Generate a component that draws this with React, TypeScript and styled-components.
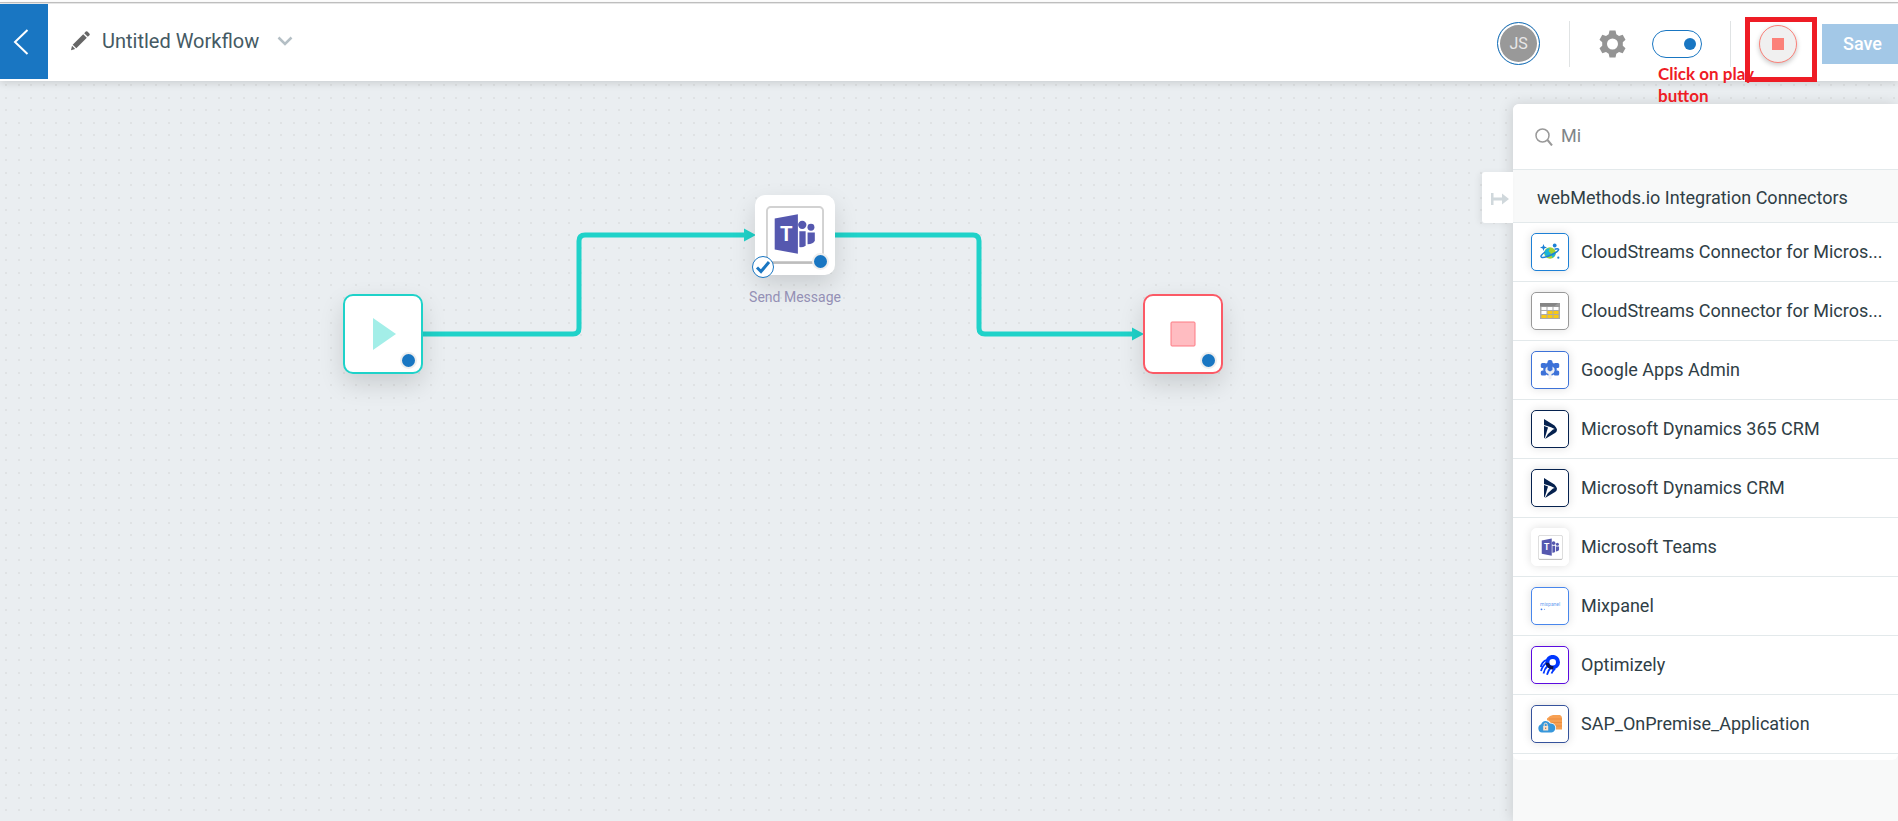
import React from "react";
import styled, { createGlobalStyle } from "styled-components";

const GlobalStyle = createGlobalStyle`
  *, *::before, *::after { box-sizing: border-box; }
  body {
    margin: 0;
    overflow-x: hidden;
    font-family: Roboto, "Liberation Sans", sans-serif;
    color: #2f3e46;
  }
  button, input { font-family: inherit; }
`;

const Page = styled.div`
  display: flex;
  flex-direction: column;
  min-height: 100vh;
  background: #ffffff;
`;

const WindowEdge = styled.div`
  height: 4px;
  border-top: 2px solid #ffffff;
  background: linear-gradient(#c4c4c4 50%, #f0f0f0 50%);
`;

const Header = styled.header`
  position: relative;
  z-index: 3;
  display: flex;
  justify-content: space-between;
  height: 77px;
  background: #ffffff;
  box-shadow: 0 2px 8px rgba(0, 0, 0, 0.14);
`;

const HeaderSide = styled.div`
  display: flex;
  align-items: center;
`;

const HeaderActions = styled(HeaderSide)`
  padding-top: 2px;
`;

const BackButton = styled.button`
  display: grid;
  place-items: center;
  align-self: flex-start;
  width: 48px;
  height: 75px;
  padding: 0 6px 0 0;
  border: 0;
  background: #1976c2;
  cursor: pointer;
`;

const TitleBar = styled.div`
  display: flex;
  align-items: center;
  padding: 0 0 4px 22px;
`;

const Title = styled.h1`
  margin: 0 18px 0 12px;
  font-size: 20px;
  line-height: 24px;
  font-weight: 400;
  color: #455a64;
`;

const PlainButton = styled.button`
  display: grid;
  place-items: center;
  padding: 0;
  border: 0;
  background: none;
  cursor: pointer;
`;

const Avatar = styled.button`
  width: 43px;
  height: 43px;
  padding: 0;
  border: 1px solid #1976c2;
  border-radius: 50%;
  background: #999999;
  box-shadow: inset 0 0 0 2px #ffffff;
  color: #e8e8e8;
  font-size: 16px;
  line-height: 20px;
`;

const Divider = styled.span<{ $gap: number }>`
  width: 1px;
  height: 46px;
  margin: 0 ${(p) => p.$gap}px;
  background: #e0e3e4;
`;

const Toggle = styled.input`
  appearance: none;
  display: flex;
  align-items: center;
  justify-content: flex-end;
  width: 50px;
  height: 28px;
  margin: 0 0 0 26px;
  padding: 0 5px;
  border: 1px solid #1976c2;
  border-radius: 14px;
  background: #ffffff;
  &::before {
    content: "";
    width: 12px;
    height: 12px;
    border-radius: 50%;
    background: #1976c2;
  }
`;

const StopArea = styled.div`
  position: relative;
  display: flex;
`;

const StopButton = styled.button`
  display: grid;
  place-items: center;
  width: 38px;
  height: 38px;
  padding: 0;
  border: 1px solid #fb8179;
  border-radius: 50%;
  background: #f0f0f0;
  box-shadow: 0 2px 5px rgba(0, 0, 0, 0.22);
  &::before {
    content: "";
    width: 12px;
    height: 12px;
    background: #fb8179;
  }
`;

const Highlight = styled.span`
  position: absolute;
  top: -8px;
  left: -14px;
  width: 72px;
  height: 65px;
  border: 5px solid #ee1c25;
  pointer-events: none;
`;

const Callout = styled.p`
  position: absolute;
  top: 38px;
  left: -101px;
  width: 115px;
  margin: 0;
  font: 700 17px/22px Lato, "Open Sans", sans-serif;
  color: #ee1c25;
`;

const SaveButton = styled.button`
  height: 40px;
  margin-left: 25px;
  padding: 0 16px 0 21px;
  border: 0;
  background: #a3c8e7;
  color: #ffffff;
  font-size: 18px;
  font-weight: 500;
  line-height: 24px;
`;

const dot = "radial-gradient(circle at 12px 12px, #dfe2e4 1px, transparent 1px)";

const Workspace = styled.main`
  display: flex;
  flex: 1;
  background-color: #eaeef1;
  background-image: ${dot}, ${dot}, ${dot}, ${dot};
  background-size: 25px 25px;
  background-position: -6px -8px, 7px -8px, -6px 5px, 7px 5px;
`;

const Canvas = styled.section`
  position: relative;
  flex: 1;
  min-width: 0;
`;

const Wires = styled.svg`
  position: absolute;
  top: 0;
  left: 0;
  width: 100%;
  height: 100%;
`;

const Node = styled.div<{ $x: number; $y: number; $edge: string }>`
  position: absolute;
  left: ${(p) => p.$x}px;
  top: ${(p) => p.$y}px;
  display: grid;
  place-items: center;
  width: 80px;
  height: 80px;
  border: 2px solid ${(p) => p.$edge};
  border-radius: 10px;
  background: #ffffff;
  box-shadow: 0 10px 24px rgba(0, 0, 0, 0.14);
`;

const Dot = styled.span`
  position: absolute;
  right: 4px;
  bottom: 3px;
  width: 17px;
  height: 17px;
  border: 2px solid #eeeeee;
  border-radius: 50%;
  background: #1976c2;
`;

const Check = styled.span`
  position: absolute;
  left: -5px;
  bottom: -5px;
  display: grid;
  place-items: center;
  width: 22px;
  height: 22px;
  border: 1px solid #1976c2;
  border-radius: 50%;
  background: #ffffff;
`;

const NodeLabel = styled.span`
  position: absolute;
  top: 90px;
  left: 50%;
  transform: translateX(-50%);
  font-size: 14px;
  line-height: 20px;
  white-space: nowrap;
  color: #9490b5;
`;

const Panel = styled.aside`
  position: relative;
  display: flex;
  flex-direction: column;
  width: 385px;
  margin-top: 23px;
  border-top-left-radius: 6px;
  background: #f8f9f9;
  box-shadow: -2px 0 14px rgba(0, 0, 0, 0.13);
`;

const CollapseTab = styled.button`
  position: absolute;
  top: 68px;
  left: -31px;
  display: grid;
  place-items: center;
  width: 31px;
  height: 51px;
  padding: 2px 0 0 5px;
  border: 0;
  border-radius: 3px 0 0 3px;
  background: #ffffff;
  box-shadow: -3px 1px 6px rgba(0, 0, 0, 0.06);
`;

const Search = styled.label`
  display: flex;
  align-items: center;
  gap: 8px;
  height: 66px;
  padding: 0 22px;
  border-bottom: 1px solid #e3e9eb;
  border-top-left-radius: 6px;
  background: #ffffff;
`;

const SearchInput = styled.input`
  flex: 1;
  min-width: 0;
  padding: 0 0 2px;
  border: 0;
  outline: 0;
  background: none;
  font-size: 18px;
  line-height: 24px;
  color: #808588;
`;

const GroupTitle = styled.h2`
  margin: 0;
  padding: 16px 24px 12px;
  border-bottom: 1px solid #e3e9eb;
  font-size: 18px;
  line-height: 24px;
  font-weight: 400;
`;

const List = styled.ul`
  margin: 0;
  padding: 0 0 6px;
  border-radius: 0 0 6px 6px;
  background: #ffffff;
  list-style: none;
`;

const Row = styled.li`
  display: flex;
  align-items: center;
  gap: 12px;
  height: 59px;
  padding: 0 18px;
  border-bottom: 1px solid #e3e9eb;
  font-size: 18px;
  line-height: 24px;
  white-space: nowrap;
`;

const Tile = styled.span<{ $edge: string }>`
  display: grid;
  place-items: center;
  flex: none;
  width: 38px;
  height: 38px;
  border: 1px solid ${(p) => p.$edge};
  border-radius: 5px;
  background: #ffffff;
  box-shadow: 0 0 10px rgba(0, 0, 0, 0.13);
`;

const TeamsIcon = ({ size }: { size: number }) => (
  <svg width={size} height={size} viewBox="0 0 60 60">
    <rect x="1" y="1" width="58" height="58" rx="4" fill="#fff" stroke="#d2d2d2" strokeWidth="2" />
    <path d="M3 58.500H57" stroke="#bdbdbd" strokeWidth="2.500" />
    <g fill="#5558af">
      <path d="M9 13 33 8.500V49.500L9 45z" />
      <circle cx="37.500" cy="19.500" r="4.300" />
      <circle cx="46.500" cy="22" r="3.600" />
      <path d="M34.500 26H41V41Q38 43 34.500 42.500z" />
      <path d="M43 27.500H50.500V36Q49 39.500 43 39.500z" />
    </g>
    <text x="21" y="36.500" textAnchor="middle" fontFamily="Roboto, sans-serif" fontWeight="700" fontSize="21" fill="#fff">T</text>
  </svg>
);

const PlanetIcon = () => (
  <svg width="20" height="20" viewBox="0 0 20 20">
    <circle cx="10" cy="11" r="5.800" fill="#a4d233" />
    <path d="M5 8.500Q7 5.500 10 6.500L8.500 9 11 11.500 7 15Q3.500 12.500 5 8.500zM11.500 12l4-2q.5 4-3 6z" fill="#1bb5d8" />
    <path d="M5 10Q-.5 14 1.500 15.200C5 16.500 19 10 18.600 7.400Q18 6.200 14.600 7.200" fill="none" stroke="#1d80d6" strokeWidth="1.500" />
    <path d="M3.500 2l.9 2.600L7 5.500l-2.600.9L3.500 9l-.9-2.600L0 5.500l2.600-.9z" fill="#1d80d6" />
    <circle cx="14.700" cy="3.500" r="1.900" fill="#1d80d6" />
    <circle cx="18.300" cy="15.700" r="1.100" fill="#1d80d6" />
  </svg>
);

const TableIcon = () => (
  <svg width="20" height="20" viewBox="0 0 20 20">
    <path d="M0 2H20V18H0z" fill="#aaa" />
    <path d="M0 2H20V5.500H0z" fill="#858585" />
    <path d="M14 5.500 18 2H20V5.500z" fill="#9b9b9b" />
    <path d="M1.500 6H6.500V9H1.500zM7.500 6H12.500V9H7.500zM13.500 6H18.500V9H13.500zM1.500 10H6.500V13H1.500z" fill="#fff" />
    <path d="M7.500 10H12.500V13H7.500zM13.500 10H18.500V13H13.500zM1.500 14H6.500V17H1.500zM7.500 14H12.500V17H7.500zM13.500 14H18.500V17H13.500z" fill="#f8c915" />
  </svg>
);

const AdminIcon = () => (
  <svg width="20" height="20" viewBox="0 0 20 20">
    <g fill="#3d72d8">
      <circle cx="10" cy="9" r="6.800" />
      <rect x="7.500" y="0" width="5" height="5" rx="2" />
      <rect x=".800" y="3" width="5.500" height="5" rx="1.500" />
      <rect x="13.700" y="3" width="5.500" height="5" rx="1.500" />
      <rect x=".800" y="10.500" width="5.500" height="5" rx="1.500" />
      <rect x="13.700" y="10.500" width="5.500" height="5" rx="1.500" />
    </g>
    <path d="M7.500 6.500A4 4 0 0 0 8.500 14V18.500q1.500 1.500 3 0V14A4 4 0 0 0 12.500 6.500V10L10 11.500 7.500 10z" fill="#eef0f3" />
  </svg>
);

const DynamicsIcon = () => (
  <svg width="20" height="20" viewBox="0 0 20 20" fill="#06224f">
    <path d="M4 0 14.500 6.500Q16.500 8 16.800 11L11 8.200 4 6z" />
    <path d="M16.800 9.500V12Q16.500 13 15 14L5 20 8 15 13 10.500z" />
    <path d="M4 7 8 8.500 5 18.500 4 19.500z" />
  </svg>
);

const MixpanelIcon = () => (
  <svg width="22" height="20" viewBox="0 0 22 20">
    <text x="1" y="10" fontFamily="Roboto, sans-serif" fontSize="5" fill="#6f9ff0">mixpanel</text>
    <circle cx="2.500" cy="13.300" r=".9" fill="#3c78e8" />
    <circle cx="5.500" cy="13.300" r=".6" fill="#7aa6f4" />
  </svg>
);

const OptimizelyIcon = () => (
  <svg width="20" height="20" viewBox="0 0 20 20">
    <g fill="none" stroke="#0037ff" strokeWidth="1.800">
      <path d="M6 5Q1.500 7.500 .900 12" />
      <path d="M6.500 8Q2.500 10.500 1 16" />
      <path d="M8 10.500Q4.500 13.500 3.500 18.500" />
      <path d="M11 12.500Q8 15.500 7 19.800" />
      <path d="M15 13.500Q12.500 16 11.500 18.500" />
    </g>
    <circle cx="12.700" cy="7.200" r="5.300" fill="#fff" stroke="#0037ff" strokeWidth="4" />
    <path d="M5.500 7.500A7.300 7.300 0 0 0 13 14.500L13.500 11A4 4 0 0 1 9 8z" fill="#0a1250" />
  </svg>
);

const SapIcon = () => (
  <svg width="26" height="20" viewBox="0 0 26 20">
    <path d="M10 4.500Q13 1 16 1h7q2 1 2 3v11.500H18L10 8z" fill="#f7a052" />
    <path d="M12 5H25M14 8.500H25M17 12H25" stroke="#e8893c" strokeWidth=".8" />
    <path
      d="M5 18.500a4.300 4.300 0 0 1-.8-8.300A4.800 4.800 0 0 1 13 9.500a4.500 4.500 0 0 1 1.500 9z"
      fill="#3797db"
      stroke="#fff"
      strokeWidth="1.600"
      paintOrder="stroke"
    />
    <rect x="6.200" y="12" width="5" height="4.500" fill="#fde3cb" />
    <path d="M7.200 12v-1.300a1.500 1.500 0 0 1 3 0V12" fill="none" stroke="#fde3cb" />
    <path d="M8.700 13.500V15" stroke="#a5694a" />
  </svg>
);

const connectors = [
  { name: "CloudStreams Connector for Micros...", edge: "#1d80d6", icon: <PlanetIcon /> },
  { name: "CloudStreams Connector for Micros...", edge: "#999999", icon: <TableIcon /> },
  { name: "Google Apps Admin", edge: "#3d72d8", icon: <AdminIcon /> },
  { name: "Microsoft Dynamics 365 CRM", edge: "#06224f", icon: <DynamicsIcon /> },
  { name: "Microsoft Dynamics CRM", edge: "#06224f", icon: <DynamicsIcon /> },
  { name: "Microsoft Teams", edge: "#ffffff", icon: <TeamsIcon size={25} /> },
  { name: "Mixpanel", edge: "#4886ec", icon: <MixpanelIcon /> },
  { name: "Optimizely", edge: "#5b0be0", icon: <OptimizelyIcon /> },
  { name: "SAP_OnPremise_Application", edge: "#35529c", icon: <SapIcon /> },
];

export default function App() {
  return (
    <Page>
      <GlobalStyle />
      <WindowEdge />
      <Header>
        <HeaderSide>
          <BackButton aria-label="Back">
            <svg width="18" height="26" viewBox="0 0 18 26" fill="none" stroke="#fff" strokeWidth="2">
              <path d="M15.500 1 3 13 15.500 25" />
            </svg>
          </BackButton>
          <TitleBar>
            <PlainButton aria-label="Rename workflow">
              <svg width="20" height="20" viewBox="0 0 20 20" fill="#666">
                <path d="M13.200 3.200 16.800 6.800 6.300 17.300 2.700 13.700z" />
                <path d="M14.200 2.200 15.800.600q.8-.6 1.600 0L19.400 2.600q.7.800 0 1.600L17.800 5.800z" />
                <path d="M2 14.800 5.200 18 1 19.200z" />
              </svg>
            </PlainButton>
            <Title>Untitled Workflow</Title>
            <PlainButton aria-label="Workflow menu">
              <svg width="16" height="10" viewBox="0 0 16 10" fill="none" stroke="#b4bfc5" strokeWidth="2.500">
                <path d="M1.500 1.500 8 8 14.500 1.500" />
              </svg>
            </PlainButton>
          </TitleBar>
        </HeaderSide>
        <HeaderActions>
          <Avatar>JS</Avatar>
          <Divider $gap={29} />
          <PlainButton aria-label="Settings">
            <svg width="27" height="28" viewBox="0 0 27 28">
              <path
                fill="#949494"
                fillRule="evenodd"
                d="M10.500.500h6l.8 3.800 2.700 1.600 3.700-1.200 2.800 5-2.700 2.600v3.400l2.700 2.600-2.800 5-3.700-1.200-2.700 1.600-.8 3.800h-6l-.8-3.800L7 22.100l-3.700 1.200-2.800-5 2.700-2.600v-3.400L.500 9.700l2.800-5L7 5.900l2.700-1.600zM13.500 8.500a5.500 5.500 0 1 0 0 11 5.500 5.500 0 0 0 0-11z"
              />
            </svg>
          </PlainButton>
          <Toggle type="checkbox" role="switch" aria-label="Workflow active" defaultChecked />
          <Divider $gap={28} />
          <StopArea>
            <StopButton aria-label="Stop workflow" />
            <Callout>Click on play button</Callout>
            <Highlight />
          </StopArea>
          <SaveButton>Save</SaveButton>
        </HeaderActions>
      </Header>
      <Workspace>
        <Canvas aria-label="Workflow canvas">
          <Wires>
            <g fill="none" stroke="#1fd2c9" strokeWidth="5">
              <path d="M422 253H573Q579 253 579 247V160Q579 154 585 154H746" />
              <path d="M835 154H973Q979 154 979 160V247Q979 253 985 253H1134" />
            </g>
            <path d="M744 147.500 756 154 744 160.500zM1132 246.500 1144 253 1132 259.500z" fill="#1fd2c9" />
          </Wires>
          <Node $x={343} $y={213} $edge="#1fd2c9">
            <svg width="26" height="32" viewBox="0 0 26 32">
              <path d="M3 0 26 16 3 32z" fill="#a3eee8" />
            </svg>
            <Dot />
          </Node>
          <Node $x={755} $y={114} $edge="#ffffff">
            <TeamsIcon size={58} />
            <Dot />
            <Check>
              <svg width="16" height="14" viewBox="0 0 16 14" fill="none" stroke="#1976c2" strokeWidth="3">
                <path d="M2 7.500 6 11.500 14 2" />
              </svg>
            </Check>
            <NodeLabel>Send Message</NodeLabel>
          </Node>
          <Node $x={1143} $y={213} $edge="#fb5a66">
            <svg width="26" height="26" viewBox="0 0 26 26">
              <rect x="1" y="1" width="24" height="24" rx="1" fill="#ffbcc1" stroke="#fd7a83" />
            </svg>
            <Dot />
          </Node>
        </Canvas>
        <Panel>
          <CollapseTab aria-label="Collapse panel">
            <svg width="18" height="14" viewBox="0 0 18 14" fill="#d0d8dc">
              <path d="M0 1H2.500V13H0zM2.500 5.500H11V1.500L18 7 11 12.500V8.500H2.500z" />
            </svg>
          </CollapseTab>
          <Search>
            <svg width="18" height="18" viewBox="0 0 18 18" fill="none" stroke="#999" strokeWidth="1.500">
              <circle cx="7.500" cy="7.500" r="6.500" />
              <path d="M12.500 12 17 17.500" strokeWidth="2" />
            </svg>
            <SearchInput aria-label="Search connectors" defaultValue="Mi" />
          </Search>
          <GroupTitle>webMethods.io Integration Connectors</GroupTitle>
          <List>
            {connectors.map((c, i) => (
              <Row key={i}>
                <Tile $edge={c.edge}>{c.icon}</Tile>
                {c.name}
              </Row>
            ))}
          </List>
        </Panel>
      </Workspace>
    </Page>
  );
}
